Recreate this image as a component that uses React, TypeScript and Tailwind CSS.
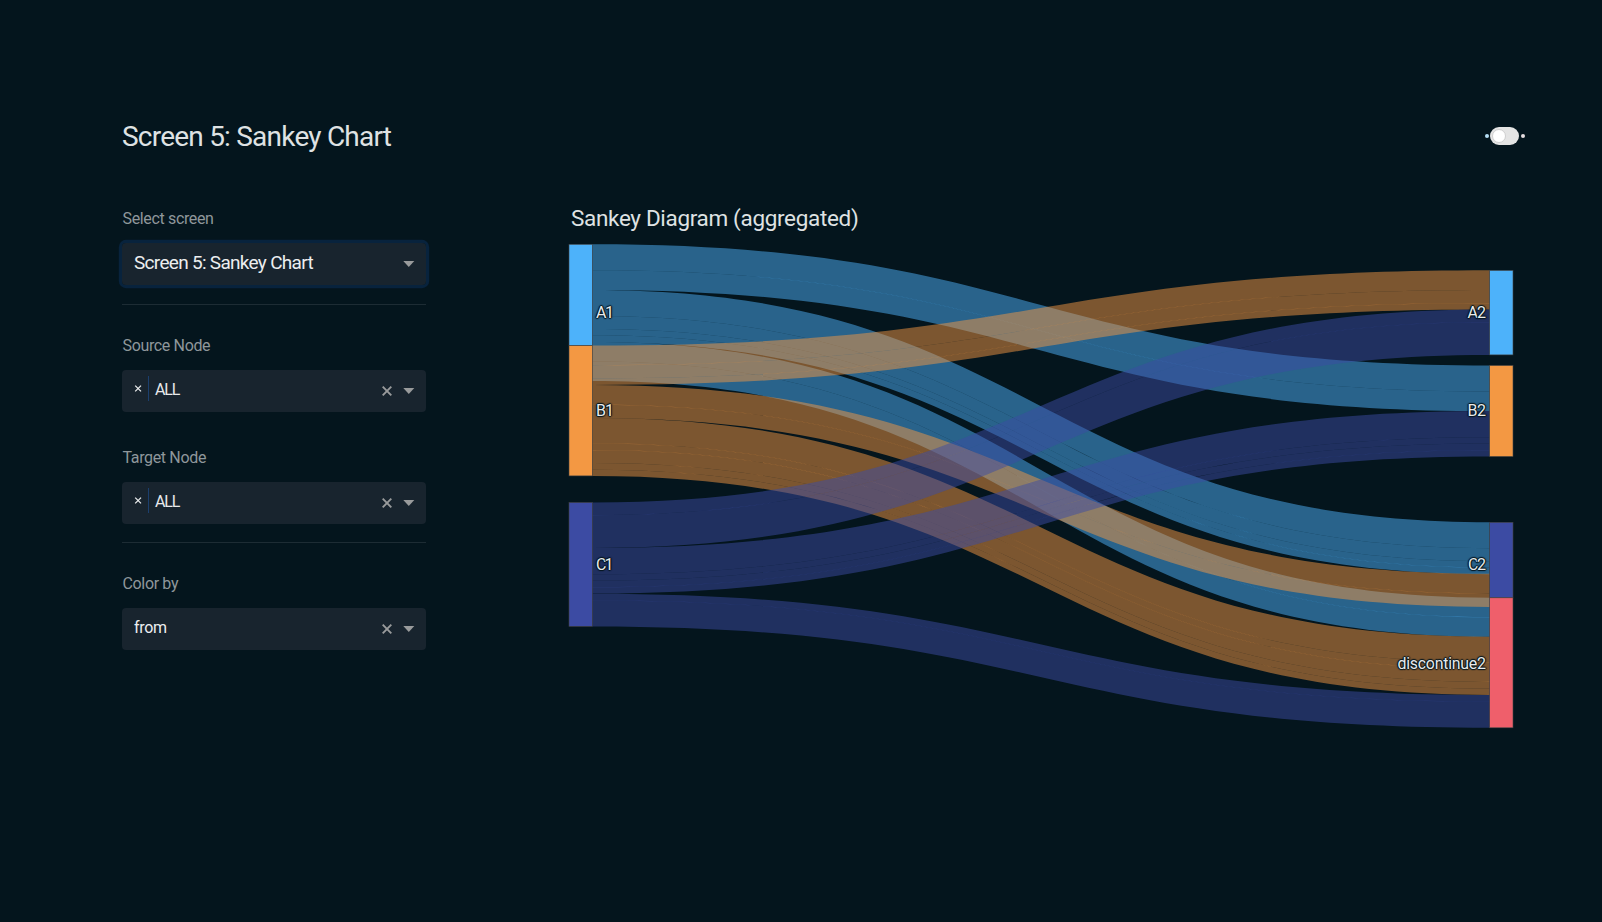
import type { ReactNode } from "react";

const SKY = "#4db2fa";
const ORANGE = "#f39843";
const INDIGO = "#3c4ba3";
const RED = "#ef5f6b";

const X0 = 23.3;
const X1 = 920.7;

type Flow = { from: number; to: number; color: string; cuts: number[] };

// Each flow is a stack of streams; `cuts` holds the offsets of their edges.
const flows: Flow[] = [
  { from: 244.3, to: 365.5, color: SKY, cuts: [0, 25.9, 45.5] },
  { from: 289.9, to: 522.2, color: SKY, cuts: [0, 26, 39, 45.3, 51.9] },
  { from: 342, to: 597.7, color: SKY, cuts: [0, 19.4, 39] },
  { from: 345.6, to: 270.3, color: ORANGE, cuts: [0, 19.6, 32.8, 39.2] },
  { from: 385, to: 573.8, color: ORANGE, cuts: [0, 19.6, 33] },
  { from: 417.9, to: 636.7, color: ORANGE, cuts: [0, 25.4, 32.2, 45.1, 51.8, 58.1] },
  { from: 502.5, to: 309.5, color: INDIGO, cuts: [0, 12.6, 45.4] },
  { from: 547.9, to: 410.9, color: INDIGO, cuts: [0, 26.3, 32.5, 39.2, 45.5] },
  { from: 593.8, to: 695.1, color: INDIGO, cuts: [0, 6.5, 32.6] },
];

const nodes = [
  { x: 0, y: 244.3, h: 101.4, color: SKY },
  { x: 0, y: 345.7, h: 130.2, color: ORANGE },
  { x: 0, y: 502.5, h: 123.8, color: INDIGO },
  { x: 920.7, y: 270.4, h: 84.5, color: SKY },
  { x: 920.7, y: 365.5, h: 91, color: ORANGE },
  { x: 920.7, y: 522.3, h: 75.5, color: INDIGO },
  { x: 920.7, y: 597.8, h: 130, color: RED },
];

const labels = [
  { text: "A1", x: 27, y: 317.8, w: 18, end: false },
  { text: "B1", x: 27, y: 416.2, w: 18, end: false },
  { text: "C1", x: 27, y: 569.9, w: 17.5, end: false },
  { text: "A2", x: 917, y: 318, w: 18.5, end: true },
  { text: "B2", x: 917, y: 416.2, w: 18.5, end: true },
  { text: "C2", x: 917, y: 570, w: 18, end: true },
  { text: "discontinue2", x: 917, y: 668.6, w: 88.5, end: true },
];

function band(a: number, b: number, h: number) {
  const m = (X0 + X1) / 2;
  return `M${X0},${a}C${m},${a} ${m},${b} ${X1},${b}L${X1},${b + h}C${m},${b + h} ${m},${a + h} ${X0},${a + h}Z`;
}

function Sankey() {
  return (
    <svg className="block overflow-visible" width="945" height="486" viewBox="0 243 945 486">
      {flows.map((f, i) =>
        f.cuts.slice(1).map((c, j) => (
          <path
            key={`${i}-${j}`}
            d={band(f.from + f.cuts[j], f.to + f.cuts[j], c - f.cuts[j] + 0.12)}
            fill={f.color}
            fillOpacity={0.5}
          />
        )),
      )}
      {nodes.map((n, i) => (
        <rect key={i} x={n.x} y={n.y} width={23.3} height={n.h} fill={n.color} stroke="#444" strokeWidth={0.6} />
      ))}
      {labels.map((l) => (
        <text
          key={l.text}
          x={l.end ? l.x - l.w : l.x}
          y={l.y}
          textLength={l.w}
          className="fill-[#e9ebec] text-[16px] [text-shadow:0_1px_1px_#04151d,0_-1px_1px_#04151d,1px_0_1px_#04151d,-1px_0_1px_#04151d,0_0_2px_#04151d]"
        >
          {l.text}
        </text>
      ))}
    </svg>
  );
}

function Caret() {
  return (
    <svg width="12" height="6" viewBox="0 0 12 6" className="block">
      <path d="M0.3 0H11.3L5.8 5.9Z" fill="#999b9c" />
    </svg>
  );
}

function Cross({ small = false }: { small?: boolean }) {
  return small ? (
    <svg width="8" height="7" viewBox="0 0 8 7" className="block">
      <path d="M1.2 0.6L7 6.4M7 0.6L1.2 6.4" stroke="#e8eaeb" strokeWidth="1.3" />
    </svg>
  ) : (
    <svg width="10" height="10" viewBox="0 0 10 10" className="block">
      <path d="M0.7 0.7L9.3 9.3M9.3 0.7L0.7 9.3" stroke="#999b9c" strokeWidth="1.9" />
    </svg>
  );
}

function Field({ children, clearable = true }: { children: ReactNode; clearable?: boolean }) {
  return (
    <div className="flex h-[42px] items-center rounded-[4px] bg-[#18242e] pr-[11.5px] pl-3">
      <div className="flex h-full flex-1">{children}</div>
      {clearable && (
        <div className="mr-[11px]">
          <Cross />
        </div>
      )}
      <Caret />
    </div>
  );
}

function Tag() {
  return (
    <div className="flex pt-1.5">
      <div className="flex h-[25px] w-[15px] items-center border-r border-[#1b3f6e]">
        <Cross small />
      </div>
      <span className="pt-px pl-[6px] text-[16px] leading-[25px] tracking-[-1.1px] text-[#e8eaeb]">ALL</span>
    </div>
  );
}

export default function App() {
  return (
    <main className="h-[922px] w-[1602px] overflow-hidden bg-[#04151d] pt-[116px] pr-[77px] pl-[122px] font-['Roboto','Liberation_Sans',sans-serif] whitespace-nowrap text-[#dfe2e3]">
      <header className="flex h-10 items-center justify-between">
        <h1 className="pt-[2px] text-[28px] leading-10 tracking-[-0.78px]">Screen 5: Sankey Chart</h1>
        <div className="flex items-center">
          <span className="h-1 w-1 rounded-full bg-[#b5def5]" />
          <div className="mr-[2px] ml-px flex h-[18px] w-[29px] items-center rounded-full bg-[#e4e4e4] pl-[2px]">
            <span className="h-[14px] w-[14px] rounded-full border border-[#cfcfcf] bg-white" />
          </div>
          <span className="h-1 w-1 rounded-full bg-[#e5dde0]" />
        </div>
      </header>

      <div className="flex pt-[48px]">
        <aside className="w-[304px] text-[16px] tracking-[-0.35px] text-[#8f979b]">
          <div className="h-[38.5px] pt-[5px] pl-[0.5px] leading-5">Select screen</div>
          <div className="rounded-[4px] shadow-[0_0_0_3.2px_#08233d]">
            <Field clearable={false}>
              <span className="self-center pb-px text-[19px] leading-6 tracking-[-0.7px] text-[#eceeef]">
                Screen 5: Sankey Chart
              </span>
            </Field>
          </div>
          <hr className="mt-[19px] border-0 border-t border-[#1d2c34]" />
          <div className="h-[65.5px] pt-[31.5px] pl-[0.5px] leading-5">Source Node</div>
          <Field>
            <Tag />
          </Field>
          <div className="h-[69.5px] pt-[35.5px] pl-[0.5px] leading-5">Target Node</div>
          <Field>
            <Tag />
          </Field>
          <hr className="mt-[18.5px] border-0 border-t border-[#1d2c34]" />
          <div className="h-[65px] pt-[31px] pl-[0.5px] leading-5">Color by</div>
          <Field>
            <span className="self-center pb-[2px] text-[16px] leading-5 text-[#eceeef]">from</span>
          </Field>
        </aside>

        <section className="ml-[143px] w-[945px]">
          <h2 className="-mt-px h-[40px] pl-[2px] text-[22.5px] leading-[30px] tracking-[-0.33px]">
            Sankey Diagram (aggregated)
          </h2>
          <Sankey />
        </section>
      </div>
    </main>
  );
}
